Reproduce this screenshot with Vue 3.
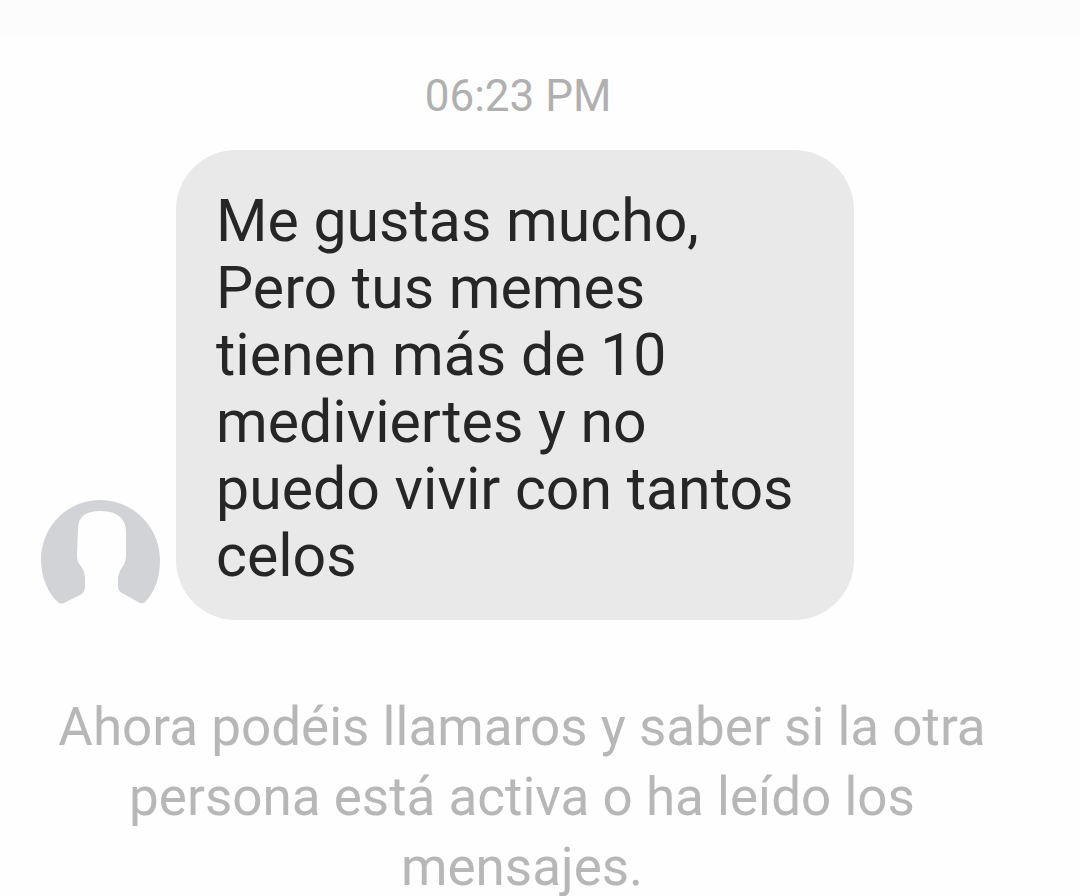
<script setup>
const time = '06:23 PM'
const lines = [
  'Me gustas mucho,',
  'Pero tus memes',
  'tienen más de 10',
  'mediviertes y no',
  'puedo vivir con tantos',
  'celos',
]
const notice = [
  'Ahora podéis llamaros y saber si la otra',
  'persona está activa o ha leído los',
  'mensajes.',
]
</script>

<template>
  <main class="chat">
    <time class="time">{{ time }}</time>
    <article class="message">
      <svg class="avatar" viewBox="0 0 120 120" role="img" aria-label="Avatar">
        <path
          fill="#d1d3d7"
          d="M60 0C27 0 1 27 1 60C1 77 8 94 19 103Q21 104 24 103L40 95Q45 92 45 87V77Q44 69 40 65Q37 62 37 55L38 30Q38 19 44 15Q50 11 61 11Q74 11 80 17Q86 22 86 33V55Q86 62 83 66Q79 71 78 77V86Q78 91 82 93L100 103Q103 104 105 102C115 92 120 77 120 60C120 27 93 0 60 0Z"
        />
      </svg>
      <p class="bubble">
        <span v-for="line in lines" :key="line" class="line">{{ line }}</span>
      </p>
    </article>
    <p class="notice">
      <span v-for="line in notice" :key="line" class="line">{{ line }}</span>
    </p>
  </main>
</template>

<style>
body {
  margin: 0;
  background: #fefefe;
}
</style>

<style scoped>
.chat {
  box-sizing: border-box;
  height: 100vh;
  overflow: hidden;
  padding: 68px 40px 0;
  font-family: Roboto, "Liberation Sans", sans-serif;
  background: linear-gradient(#fcfcfc 32px, #fefefe 42px);
}

.time {
  display: block;
  margin-right: 44px;
  text-align: center;
  font-size: 44px;
  line-height: 56px;
  color: #b0b0b0;
}

.message {
  display: flex;
  align-items: flex-end;
  gap: 16px;
  margin-top: 26px;
}

.avatar {
  flex: none;
  width: 120px;
  height: 120px;
}

.bubble {
  box-sizing: border-box;
  flex: 0 1 678px;
  margin: 0;
  padding: 37px 40px 31px;
  border-radius: 60px;
  background: #e9e9e9;
  color: #262626;
  font-size: 59px;
  line-height: 67px;
}

.line {
  display: block;
  white-space: nowrap;
}

.notice {
  margin: 72px 36px 0 0;
  text-align: center;
  font-size: 53px;
  line-height: 70px;
  color: #b7b7b7;
}
</style>
